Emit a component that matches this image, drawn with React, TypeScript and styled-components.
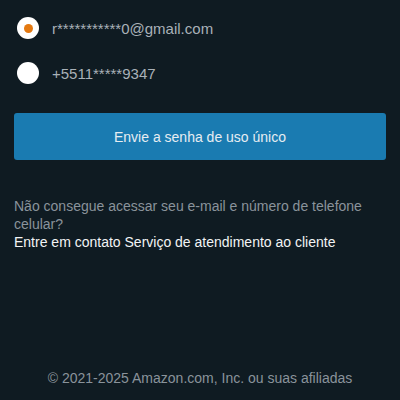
import * as React from 'react';
import styled, { createGlobalStyle } from 'styled-components';

const GlobalStyle = createGlobalStyle`
    html, body {
        margin: 0;
        padding: 0;
        background: #0f1b22;
    }
    body {
        font-family: "Liberation Sans", Arial, sans-serif;
    }
`;

const Page = styled.div`
    width: 400px;
    height: 400px;
    box-sizing: border-box;
    padding: 17px 14px 0;
    display: flex;
    flex-direction: column;
    background: #0f1b22;
`;

const OptionList = styled.div`
    display: flex;
    flex-direction: column;
    gap: 23px;
    padding-left: 3px;
`;

const Option = styled.label`
    display: flex;
    align-items: center;
    gap: 13px;
    height: 22px;
    color: #a9b1b8;
    font-size: 15px;
`;

const Radio = styled.span<{ checked?: boolean }>`
    width: 22px;
    height: 22px;
    border-radius: 50%;
    background: #ffffff;
    display: flex;
    align-items: center;
    justify-content: center;
    flex-shrink: 0;

    &::after {
        content: '';
        width: 9px;
        height: 9px;
        border-radius: 50%;
        background: ${p => (p.checked ? '#e47911' : 'transparent')};
    }
`;

const SendButton = styled.button`
    margin-top: 29px;
    width: 100%;
    height: 47px;
    border: none;
    border-radius: 3px;
    background: #1a7bb1;
    color: #e6edf2;
    font-family: inherit;
    font-size: 14px;
`;

const Help = styled.div`
    margin-top: 37px;
    font-size: 14px;
    line-height: 18px;
`;

const HelpQuestion = styled.div`
    color: #8a939b;
`;

const HelpLink = styled.div`
    color: #f2f4f5;
`;

const Footer = styled.div`
    margin-top: auto;
    margin-bottom: 14px;
    text-align: center;
    color: #8a939b;
    font-size: 14px;
`;

export default function App() {
    return (
        <>
            <GlobalStyle />
            <Page>
                <OptionList>
                    <Option>
                        <Radio checked />
                        r***********0@gmail.com
                    </Option>
                    <Option>
                        <Radio />
                        +5511*****9347
                    </Option>
                </OptionList>
                <SendButton>Envie a senha de uso único</SendButton>
                <Help>
                    <HelpQuestion>Não consegue acessar seu e-mail e número de telefone celular?</HelpQuestion>
                    <HelpLink>Entre em contato Serviço de atendimento ao cliente</HelpLink>
                </Help>
                <Footer>© 2021-2025 Amazon.com, Inc. ou suas afiliadas</Footer>
            </Page>
        </>
    );
}
